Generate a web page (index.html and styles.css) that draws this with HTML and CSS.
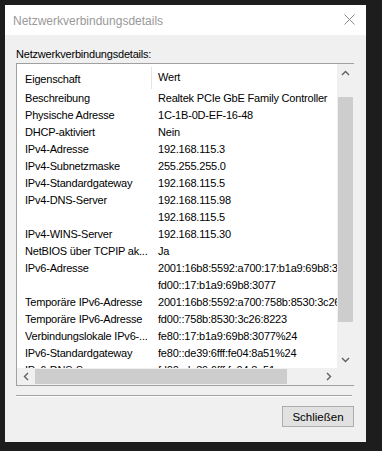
FILE: index.html
```html
<!DOCTYPE html>
<html lang="de">
<head>
  <meta charset="UTF-8">
  <meta name="viewport" content="width=device-width, initial-scale=1.0">
  <title>Netzwerkverbindungsdetails</title>
  <link rel="stylesheet" href="styles.css">
</head>
<body>
  <div class="window">
    <div class="titlebar">
      <span class="title">Netzwerkverbindungsdetails</span>
      <svg class="close" width="11" height="11" viewBox="0 0 11 11">
        <path d="M0.5 0.5 L10.5 10.5 M10.5 0.5 L0.5 10.5" stroke="#8a8a8a" stroke-width="1" fill="none"/>
      </svg>
    </div>

    <div class="content">
      <div class="label">Netzwerkverbindungsdetails:</div>

      <div class="listbox">
        <div class="list-view">
          <div class="row header">
            <div class="cell prop">Eigenschaft</div>
            <div class="cell val">Wert</div>
          </div>
          <div class="row"><div class="cell prop">Beschreibung</div><div class="cell val">Realtek PCIe GbE Family Controller</div></div>
          <div class="row"><div class="cell prop">Physische Adresse</div><div class="cell val">1C-1B-0D-EF-16-48</div></div>
          <div class="row"><div class="cell prop">DHCP-aktiviert</div><div class="cell val">Nein</div></div>
          <div class="row"><div class="cell prop">IPv4-Adresse</div><div class="cell val">192.168.115.3</div></div>
          <div class="row"><div class="cell prop">IPv4-Subnetzmaske</div><div class="cell val">255.255.255.0</div></div>
          <div class="row"><div class="cell prop">IPv4-Standardgateway</div><div class="cell val">192.168.115.5</div></div>
          <div class="row"><div class="cell prop">IPv4-DNS-Server</div><div class="cell val">192.168.115.98</div></div>
          <div class="row"><div class="cell prop"></div><div class="cell val">192.168.115.5</div></div>
          <div class="row"><div class="cell prop">IPv4-WINS-Server</div><div class="cell val">192.168.115.30</div></div>
          <div class="row"><div class="cell prop">NetBIOS über TCPIP ak...</div><div class="cell val">Ja</div></div>
          <div class="row"><div class="cell prop">IPv6-Adresse</div><div class="cell val">2001:16b8:5592:a700:17:b1a9:69b8:3077</div></div>
          <div class="row"><div class="cell prop"></div><div class="cell val">fd00::17:b1a9:69b8:3077</div></div>
          <div class="row"><div class="cell prop">Temporäre IPv6-Adresse</div><div class="cell val">2001:16b8:5592:a700:758b:8530:3c26:8223</div></div>
          <div class="row"><div class="cell prop">Temporäre IPv6-Adresse</div><div class="cell val">fd00::758b:8530:3c26:8223</div></div>
          <div class="row"><div class="cell prop">Verbindungslokale IPv6-...</div><div class="cell val">fe80::17:b1a9:69b8:3077%24</div></div>
          <div class="row"><div class="cell prop">IPv6-Standardgateway</div><div class="cell val">fe80::de39:6fff:fe04:8a51%24</div></div>
          <div class="row"><div class="cell prop">IPv6-DNS-Server</div><div class="cell val">fd00::de39:6fff:fe04:8a51</div></div>
        </div>

        <div class="vscroll">
          <div class="arrow">
            <svg width="9" height="6" viewBox="0 0 9 6"><path d="M1 5 L4.5 1.5 L8 5" stroke="#606060" stroke-width="1.4" fill="none"/></svg>
          </div>
          <div class="track">
            <div class="thumb"></div>
          </div>
          <div class="arrow">
            <svg width="9" height="6" viewBox="0 0 9 6"><path d="M1 1 L4.5 4.5 L8 1" stroke="#606060" stroke-width="1.4" fill="none"/></svg>
          </div>
        </div>

        <div class="hscroll">
          <div class="arrow">
            <svg width="6" height="9" viewBox="0 0 6 9"><path d="M5 1 L1.5 4.5 L5 8" stroke="#606060" stroke-width="1.4" fill="none"/></svg>
          </div>
          <div class="track">
            <div class="thumb"></div>
          </div>
          <div class="arrow">
            <svg width="6" height="9" viewBox="0 0 6 9"><path d="M1 1 L4.5 4.5 L1 8" stroke="#606060" stroke-width="1.4" fill="none"/></svg>
          </div>
        </div>

        <div class="corner"></div>
      </div>

      <div class="separator"></div>

      <div class="actions">
        <button class="close-button">Schließen</button>
      </div>
    </div>
  </div>
</body>
</html>
```

FILE: styles.css
```css
body {
  margin: 0;
  padding: 5px 0 0 5px;
  background-color: #1d1d1d;
  font-family: "Liberation Sans", Arial, sans-serif;
  font-size: 11px;
  color: #000;
}

.window {
  width: 361px;
  height: 437px;
  background-color: #f0f0f0;
  display: flex;
  flex-direction: column;
}

.titlebar {
  height: 30px;
  background-color: #fff;
  display: flex;
  align-items: center;
  justify-content: space-between;
  padding: 0 11px 0 8px;
}

.title {
  font-size: 12px;
  color: #999;
  padding-top: 1px;
}

.close {
  display: block;
  margin-top: -1px;
}

.content {
  padding: 11px 12px 0 11px;
  display: flex;
  flex-direction: column;
  letter-spacing: -0.2px;
}

.label {
  line-height: 16px;
  height: 17px;
}

.listbox {
  height: 321px;
  border: 1px solid #a0a0a0;
  background-color: #fff;
  display: grid;
  grid-template-columns: 320px 17px;
  grid-template-rows: 304px 17px;
}

.list-view {
  overflow: hidden;
}

.row {
  display: flex;
  height: 17px;
  line-height: 17px;
  white-space: nowrap;
}

.row.header {
  height: 26px;
  line-height: 26px;
}

.cell.prop {
  width: 127px;
  flex: none;
  padding-left: 8px;
  overflow: hidden;
}

.cell.val {
  padding-left: 6px;
}

.header .cell.prop {
  border-right: 1px solid #e5e5e5;
  width: 126px;
  height: 22px;
  line-height: 24px;
  margin-top: 3px;
}

.header .cell.val {
  line-height: 26px;
}

.vscroll {
  background-color: #f0f0f0;
  display: flex;
  flex-direction: column;
}

.vscroll .arrow {
  height: 17px;
  display: flex;
  align-items: center;
  justify-content: center;
}

.vscroll .track {
  flex: 1;
  padding: 16px 1px 0 1px;
}

.vscroll .thumb {
  height: 225px;
  background-color: #cdcdcd;
}

.hscroll {
  background-color: #f0f0f0;
  display: flex;
}

.hscroll .arrow {
  width: 17px;
  display: flex;
  align-items: center;
  justify-content: center;
}

.hscroll .track {
  flex: 1;
  padding: 1px 0 1px 1px;
}

.hscroll .thumb {
  width: 252px;
  height: 15px;
  background-color: #cdcdcd;
}

.corner {
  background-color: #f0f0f0;
}

.separator {
  height: 1px;
  background-color: #a0a0a0;
  border-bottom: 1px solid #fff;
  margin: 9px 2px 0 0;
}

.actions {
  display: flex;
  justify-content: flex-end;
  padding-top: 9px;
}

.close-button {
  width: 72px;
  height: 21px;
  padding: 0;
  background-color: #e1e1e1;
  border: 1px solid #adadad;
  border-radius: 0;
  font-family: "Liberation Sans", Arial, sans-serif;
  font-size: 11.5px;
  letter-spacing: 0;
  color: #000;
}
```
